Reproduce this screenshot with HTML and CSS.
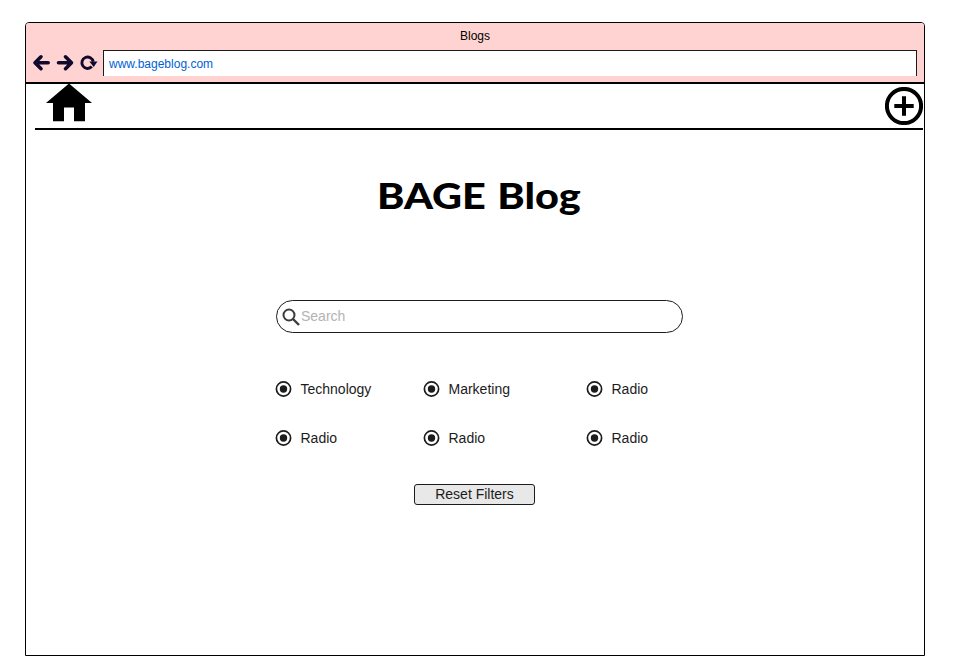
FILE: index.html
```html
<!DOCTYPE html>
<html lang="en">
<head>
<meta charset="utf-8">
<title>Blogs</title>
<link rel="stylesheet" href="styles.css">
</head>
<body>
<div class="window">
  <header class="chrome">
    <div class="tab-title">Blogs</div>
    <div class="nav">
      <svg class="nav-icons" width="70" height="22" viewBox="0 0 70 22" fill="none" stroke="#120a2c">
        <g stroke-width="3.6" stroke-linecap="round" stroke-linejoin="round">
          <path d="M8 4.800 2 10.700l6 6M2.600 10.700H15.200"/>
          <path d="M32.500 4.800 38.500 10.700l-6 6M37.900 10.700H25.500"/>
        </g>
        <path stroke-width="2.900" d="M58.800 14.600A5.700 5.700 0 1 1 60.200 9.800"/>
        <path fill="#120a2c" stroke="none" d="M56.300 9.600h8.200L60.700 15z"/>
      </svg>
      <div class="address">www.bageblog.com</div>
    </div>
  </header>
  <nav class="toolbar">
    <svg class="home" width="46" height="38" viewBox="0 0 46 38"><path d="M23 -.5 46 19H39V37.200H28V23.500H18V37.200H7V19H0z"/></svg>
    <svg class="add" width="38" height="38" viewBox="0 0 38 38" fill="none" stroke="#000" stroke-width="4"><circle cx="19" cy="19" r="17.100"/><path d="M9.300 19h19.400M19 9.300v19.400"/></svg>
  </nav>
  <main class="content">
    <h1 class="brand"><span>BAGE</span><span>Blog</span></h1>
    <div class="search">
      <svg width="18" height="18" viewBox="0 0 18 18" fill="none" stroke="#3c3c3c"><circle cx="7" cy="7" r="5.500" stroke-width="2"/><path d="m11 11 6 6" stroke-width="2.400"/></svg>
      <span class="placeholder">Search</span>
    </div>
    <div class="filters">
      <div class="option"><svg class="dot" width="16" height="16" viewBox="0 0 16 16"><circle class="ring" cx="7.500" cy="8" r="7.100"/><circle cx="7.500" cy="8" r="3.700"/></svg>Technology</div>
      <div class="option"><svg class="dot" width="16" height="16" viewBox="0 0 16 16"><circle class="ring" cx="7.500" cy="8" r="7.100"/><circle cx="7.500" cy="8" r="3.700"/></svg>Marketing</div>
      <div class="option"><svg class="dot" width="16" height="16" viewBox="0 0 16 16"><circle class="ring" cx="7.500" cy="8" r="7.100"/><circle cx="7.500" cy="8" r="3.700"/></svg>Radio</div>
      <div class="option"><svg class="dot" width="16" height="16" viewBox="0 0 16 16"><circle class="ring" cx="7.500" cy="8" r="7.100"/><circle cx="7.500" cy="8" r="3.700"/></svg>Radio</div>
      <div class="option"><svg class="dot" width="16" height="16" viewBox="0 0 16 16"><circle class="ring" cx="7.500" cy="8" r="7.100"/><circle cx="7.500" cy="8" r="3.700"/></svg>Radio</div>
      <div class="option"><svg class="dot" width="16" height="16" viewBox="0 0 16 16"><circle class="ring" cx="7.500" cy="8" r="7.100"/><circle cx="7.500" cy="8" r="3.700"/></svg>Radio</div>
    </div>
    <button class="reset">Reset Filters</button>
  </main>
</div>
</body>
</html>
```
FILE: styles.css
```css
* { box-sizing: border-box; }
body {
  margin: 0;
  padding: 22px 34px 0 25px;
  height: 656px;
  overflow: hidden;
  background: #fff;
  color: #1c1c1c;
  font-family: "Liberation Sans", Arial, sans-serif;
}
.window {
  display: flex;
  flex-direction: column;
  height: 634px;
  border: 1px solid #000;
  border-radius: 4px 4px 0 0;
  overflow: hidden;
}
.chrome {
  height: 61px;
  flex: none;
  background: #ffd3d1;
  border-bottom: 2px solid #000;
}
.tab-title {
  height: 27px;
  line-height: 26px;
  text-align: center;
  font-size: 12px;
  color: #000;
}
.nav { display: flex; padding: 0 7px; }
.nav-icons { margin: 2px 0 0; overflow: visible; }
.address {
  flex: 1;
  height: 26px;
  padding-left: 5px;
  border: 1px solid #1c1c1c;
  border-bottom: 0;
  background: #fff;
  color: #0061d5;
  font-size: 12px;
  line-height: 26px;
}
.toolbar {
  display: flex;
  justify-content: space-between;
  height: 46px;
  flex: none;
  margin: 0 1px 0 9px;
  padding-left: 11px;
  border-bottom: 2px solid #000;
}
.add { margin-top: 3px; }
.content {
  display: flex;
  flex-direction: column;
  align-items: flex-start;
  padding-left: 250px;
}
.brand {
  display: flex;
  gap: 10px;
  margin: 39px 0 0 101px;
  height: 52px;
  white-space: nowrap;
  color: #000;
  font: 900 36px/52px Lato, sans-serif;
  transform: scaleX(1.15);
  transform-origin: left;
}
.search {
  display: flex;
  align-items: center;
  gap: 1px;
  width: 407px;
  height: 33px;
  margin-top: 79px;
  padding-left: 5px;
  border: 1px solid #1c1c1c;
  border-radius: 17px;
  color: #b3b3b3;
  font-size: 14px;
}
.placeholder { padding-bottom: 2px; }
.filters {
  display: grid;
  grid-template-columns: 148px 163px 80px;
  grid-auto-rows: 16px;
  row-gap: 33px;
  margin-top: 48px;
  margin-left: -0.500px;
}
.option {
  display: flex;
  align-items: center;
  gap: 9px;
  font-size: 14px;
}
.dot { fill: #1c1c1c; overflow: visible; }
.ring {
  fill: #fff;
  stroke: #1c1c1c;
  stroke-width: 1.700px;
}
.reset {
  width: 121px;
  height: 21px;
  margin: 38px 0 0 138px;
  padding: 0 0 1px;
  border: 1px solid #1c1c1c;
  border-radius: 3px;
  background: #e8e8e8;
  color: #1c1c1c;
  font: 14px/18px "Liberation Sans", Arial, sans-serif;
}
```
